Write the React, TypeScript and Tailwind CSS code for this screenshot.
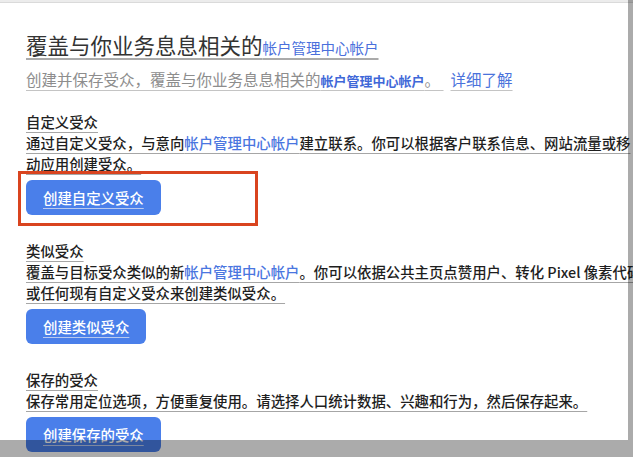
import React from 'react';

const font = "font-['Noto_Sans_CJK_SC','Noto_Sans',sans-serif]";

type Section = {
  title: string;
  lines: React.ReactNode[];
  button: string;
  marked?: boolean;
};

const Link: React.FC<{ children: React.ReactNode }> = ({ children }) => (
  <span className="text-[#4a76e0]">{children}</span>
);

const sections: Section[] = [
  {
    title: '自定义受众',
    lines: [
      <>通过自定义受众，与意向<Link>帐户管理中心帐户</Link>建立联系。你可以根据客户联系信息、网站流量或移</>,
      <>动应用创建受众。</>,
    ],
    button: '创建自定义受众',
    marked: true,
  },
  {
    title: '类似受众',
    lines: [
      <>覆盖与目标受众类似的新<Link>帐户管理中心帐户</Link>。你可以依据公共主页点赞用户、转化 Pixel 像素代码</>,
      <>或任何现有自定义受众来创建类似受众。</>,
    ],
    button: '创建类似受众',
  },
  {
    title: '保存的受众',
    lines: [<>保存常用定位选项，方便重复使用。请选择人口统计数据、兴趣和行为，然后保存起来。</>],
    button: '创建保存的受众',
  },
];

export default function App() {
  return (
    <div className={`relative w-[633px] h-[457px] overflow-hidden bg-white ${font}`}>
      {/* top chrome line */}
      <div className="h-[3px] bg-[#ececec] border-b border-[#dadada]" />

      <div className="pl-[26px] pt-[28px]">
        <div className="whitespace-nowrap leading-[28px]">
          <span className="text-[21.5px] text-[#333] underline decoration-2 decoration-[#aaaaaa] underline-offset-[4px]">
            覆盖与你业务息息相关的<span className="text-[14.5px] text-[#4a6fdc]">帐户管理中心帐户</span>
          </span>
        </div>

        <div className="mt-[6px] flex items-baseline gap-[7px] whitespace-nowrap leading-[22px]">
          <span className="text-[15.5px] text-[#8d8d8d] underline decoration-[#c4c4c4] underline-offset-[4px]">
            创建并保存受众，覆盖与你业务息息相关的
            <span className="text-[13px] font-semibold text-[#3f68d8]">帐户管理中心帐户</span>。{'\u00a0'}
          </span>
          <span className="text-[15.5px] text-[#4a72dc] underline decoration-[#c4c4c4] underline-offset-[4px]">详细了解</span>
        </div>

        <div className="mt-[19px] flex flex-col gap-[25px]">
          {sections.map((s) => (
            <div key={s.title} className="relative">
              <div className="leading-[21px] whitespace-nowrap">
                <span className="text-[14.4px] font-medium text-[#222] underline decoration-[#a6a6a6] underline-offset-[4px]">{s.title}</span>
              </div>
              <div className="text-[14.4px] font-medium leading-[21px] text-[#1e1e1e]">
                {s.lines.map((l, i) => (
                  <div key={i} className="whitespace-nowrap">
                    <span className="underline decoration-[#a6a6a6] underline-offset-[4px]">{l}</span>
                  </div>
                ))}
              </div>
              <button className="mt-[6px] h-[35px] px-[17px] rounded-[6px] bg-[#4a7fea] text-white text-[14.4px] font-medium leading-[35px] whitespace-nowrap">
                <span className="underline decoration-[#b9c9ee] underline-offset-[4px]">{s.button}</span>
              </button>
              {s.marked && (
                <div className="absolute left-[-8px] bottom-[-11px] w-[240px] h-[55px] border-[3px] border-[#d9441f] pointer-events-none" />
              )}
            </div>
          ))}
        </div>
      </div>

      {/* dimmed edges */}
      <div className="absolute right-0 top-0 h-[440px] w-[5px] bg-black/[0.33]" />
      <div className="absolute left-0 right-0 top-[440px] bottom-0 bg-black/[0.33]" />
    </div>
  );
}
